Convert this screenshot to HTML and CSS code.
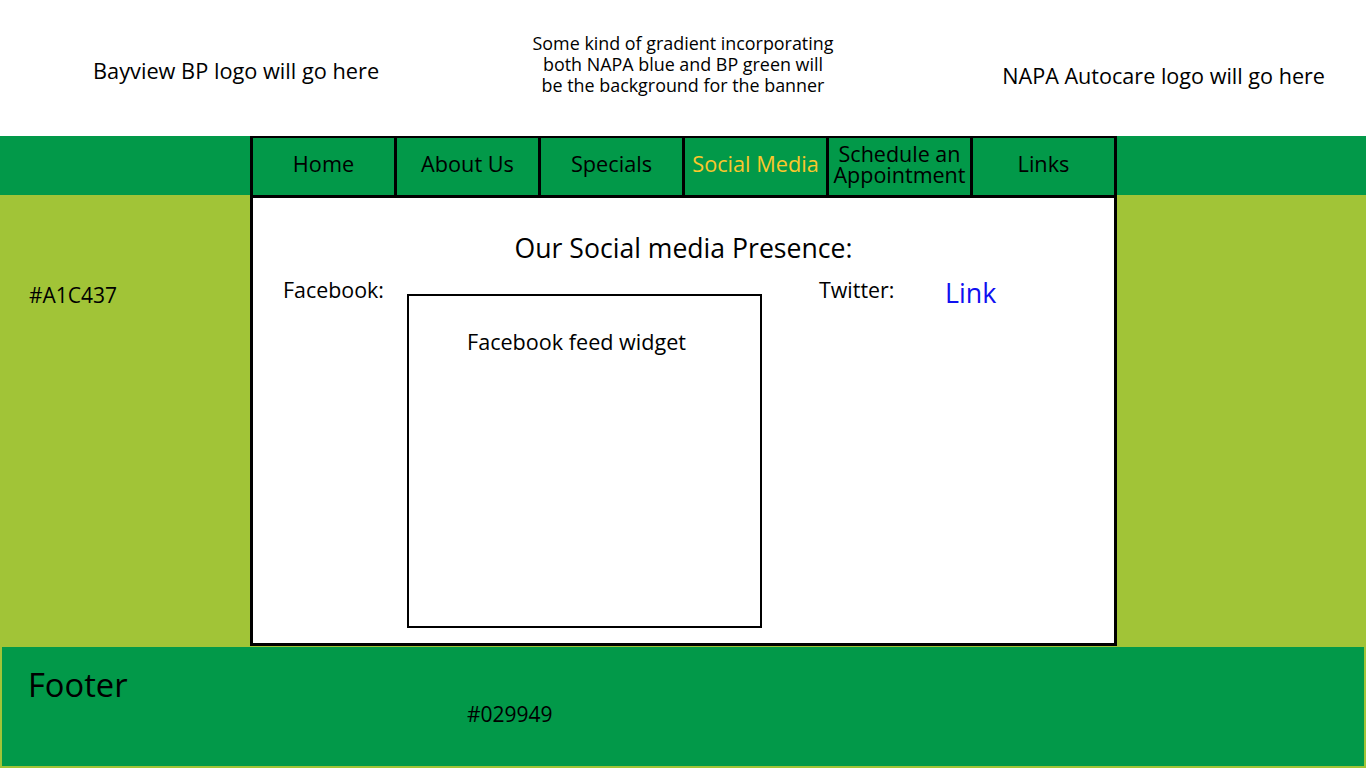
FILE: index.html
```html
<!DOCTYPE html>
<html lang="en">
<head>
<meta charset="utf-8">
<title>Bayview BP - Social Media</title>
<link rel="stylesheet" href="styles.css">
</head>
<body>
<header class="banner">
  <div class="logo-left">Bayview BP logo will go here</div>
  <div class="banner-note">
    <span class="note-line">Some kind of gradient incorporating</span>
    <span class="note-line">both NAPA blue and BP green will</span>
    <span class="note-line">be the background for the banner</span>
  </div>
  <div class="logo-right">NAPA Autocare logo will go here</div>
</header>
<div class="nav-band">
  <nav class="nav">
    <a class="nav-item" href="#">Home</a>
    <a class="nav-item" href="#">About Us</a>
    <a class="nav-item" href="#">Specials</a>
    <a class="nav-item active" href="#">Social Media</a>
    <a class="nav-item two-line" href="#"><span class="nav-line">Schedule an</span><span class="nav-line">Appointment</span></a>
    <a class="nav-item" href="#">Links</a>
  </nav>
</div>
<main class="main">
  <aside class="side-left"><span class="swatch-label">#A1C437</span></aside>
  <section class="content">
    <h1 class="title">Our Social media Presence:</h1>
    <div class="social-row">
      <span class="label fb-label">Facebook:</span>
      <div class="widget"><span class="widget-text">Facebook feed widget</span></div>
      <span class="label tw-label">Twitter:</span>
      <a class="link" href="#">Link</a>
    </div>
  </section>
  <aside class="side-right"></aside>
</main>
<footer class="footer">
  <div class="footer-title">Footer</div>
  <div class="footer-code">#029949</div>
</footer>
</body>
</html>
```
FILE: styles.css
```css
* { box-sizing: border-box; }
html, body { margin: 0; padding: 0; }
body {
  width: 1366px;
  height: 768px;
  overflow: hidden;
  background: #A1C437;
  font-family: "Open Sans", "Liberation Sans", sans-serif;
  color: #000;
}
.banner {
  height: 136px;
  background: #fff;
  display: grid;
  grid-template-columns: 1fr 1fr 1fr;
}
.logo-left {
  font-size: 21.75px;
  line-height: 28px;
  padding-left: 93px;
  padding-top: 57px;
  white-space: nowrap;
}
.banner-note {
  justify-self: center;
  display: flex;
  flex-direction: column;
  align-items: center;
  padding-top: 33px;
  white-space: nowrap;
}
.note-line {
  display: block;
  font-size: 17.9px;
  line-height: 20.8px;
  height: 20.8px;
}
.logo-right {
  justify-self: end;
  font-size: 21.6px;
  line-height: 28px;
  padding-right: 41px;
  padding-top: 62px;
  white-space: nowrap;
}
.nav-band {
  height: 59px;
  background: #029949;
  padding-left: 250px;
}
.nav {
  width: 867px;
  height: 59px;
  background: #000;
  padding: 2px 3px 0 3px;
  display: grid;
  grid-template-columns: repeat(6, 1fr);
  column-gap: 3px;
}
.nav-item {
  background: #029949;
  color: #000;
  text-decoration: none;
  display: flex;
  align-items: center;
  justify-content: center;
  text-align: center;
  font-size: 21.7px;
  line-height: 26px;
  padding-bottom: 5px;
}
.nav-item.active { color: #fcc72c; }
.nav-item.two-line {
  flex-direction: column;
  font-size: 21.5px;
  line-height: 21px;
  padding-bottom: 6px;
  white-space: nowrap;
}
.nav-line { display: block; height: 21px; }
.main {
  display: flex;
  height: 451px;
}
.side-left {
  width: 250px;
  padding-left: 29px;
  padding-top: 87px;
}
.swatch-label { font-size: 21px; line-height: 26px; }
.content {
  width: 867px;
  background: #fff;
  border: 3px solid #000;
}
.side-right { flex: 1; }
.title {
  margin: 0;
  font-weight: normal;
  font-size: 26.6px;
  line-height: 32px;
  text-align: center;
  padding-top: 34px;
}
.social-row {
  display: flex;
  align-items: flex-start;
  margin-top: 12px;
  padding-left: 30px;
}
.label { font-size: 21.4px; line-height: 26px; margin-top: 1px; }
.fb-label { width: 124px; }
.widget {
  width: 355px;
  height: 334px;
  margin-top: 18px;
  border: 2px solid #000;
  padding: 33px 0 0 58px;
}
.widget-text { font-size: 21.6px; line-height: 26px; white-space: nowrap; }
.tw-label { width: 126px; margin-left: 57px; }
.link {
  color: #1010f0;
  text-decoration: none;
  font-size: 26.8px;
  line-height: 30px;
  margin-top: 2px;
}
.footer {
  margin: 1px 2px 0 2px;
  height: 119px;
  background: #029949;
  padding: 18px 0 0 26px;
}
.footer-title { font-size: 32.7px; line-height: 40px; }
.footer-code {
  font-size: 21px;
  line-height: 24px;
  margin-top: -3px;
  margin-left: 439px;
}
```
